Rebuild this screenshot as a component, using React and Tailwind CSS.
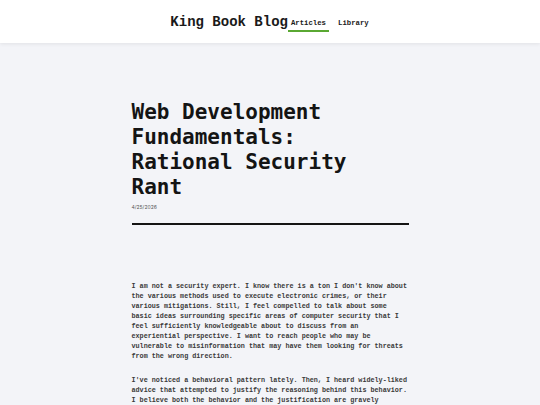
export default function App() {
  const mono = { fontFamily: '"DejaVu Sans Mono", "Liberation Mono", monospace' }
  return (
    <div className="min-h-screen bg-[#f3f4f8]">
      <header className="h-[43px] bg-white shadow-[0_1px_4px_rgba(0,0,0,0.08)] flex items-center justify-center">
        <div className="flex items-center ml-[2px] mt-[1px]">
          <span className="text-[14px] font-bold text-[#1a1a1a] font-['Liberation_Mono',monospace]">King Book Blog</span>
          <nav className="flex items-center gap-[6px] text-[7.3px] font-bold text-[#1a1a1a] font-['Liberation_Mono',monospace]">
            <a className="px-[3px] pt-[6px] pb-[1px] border-b-2 border-[#5aa832]">Articles</a>
            <a className="px-[3px] pt-[6px] pb-[1px] border-b-2 border-transparent">Library</a>
          </nav>
        </div>
      </header>

      <main className="w-[277px] mx-auto pt-[57px]">
        <h1 className="text-[21px] leading-[25px] font-bold text-[#141414]" style={mono}>
          Web Development Fundamentals: Rational Security Rant
        </h1>
        <div className="mt-[4px] text-[5px] text-[#555] font-['Inter',sans-serif]">4/25/2026</div>
        <hr className="mt-[11px] border-0 h-[2px] bg-[#141414]" />

        <div className="mt-[56px] text-[6.75px] leading-[10px] font-bold text-[#3a3a3a] font-['Liberation_Mono',monospace]">
          <p>
            I am not a security expert. I know there is a ton I don't know about the various methods used to
            execute electronic crimes, or their various mitigations. Still, I feel compelled to talk about some
            basic ideas surrounding specific areas of computer security that I feel sufficiently knowledgeable
            about to discuss from an experiential perspective. I want to reach people who may be vulnerable to
            misinformation that may have them looking for threats from the wrong direction.
          </p>
          <p className="mt-[14px]">
            I've noticed a behavioral pattern lately. Then, I heard widely-liked advice that attempted to justify
            the reasoning behind this behavior. I believe both the behavior and the justification are gravely
            mistaken, and I want to explain why in the simplest terms I can manage.
          </p>
        </div>
      </main>
    </div>
  )
}
